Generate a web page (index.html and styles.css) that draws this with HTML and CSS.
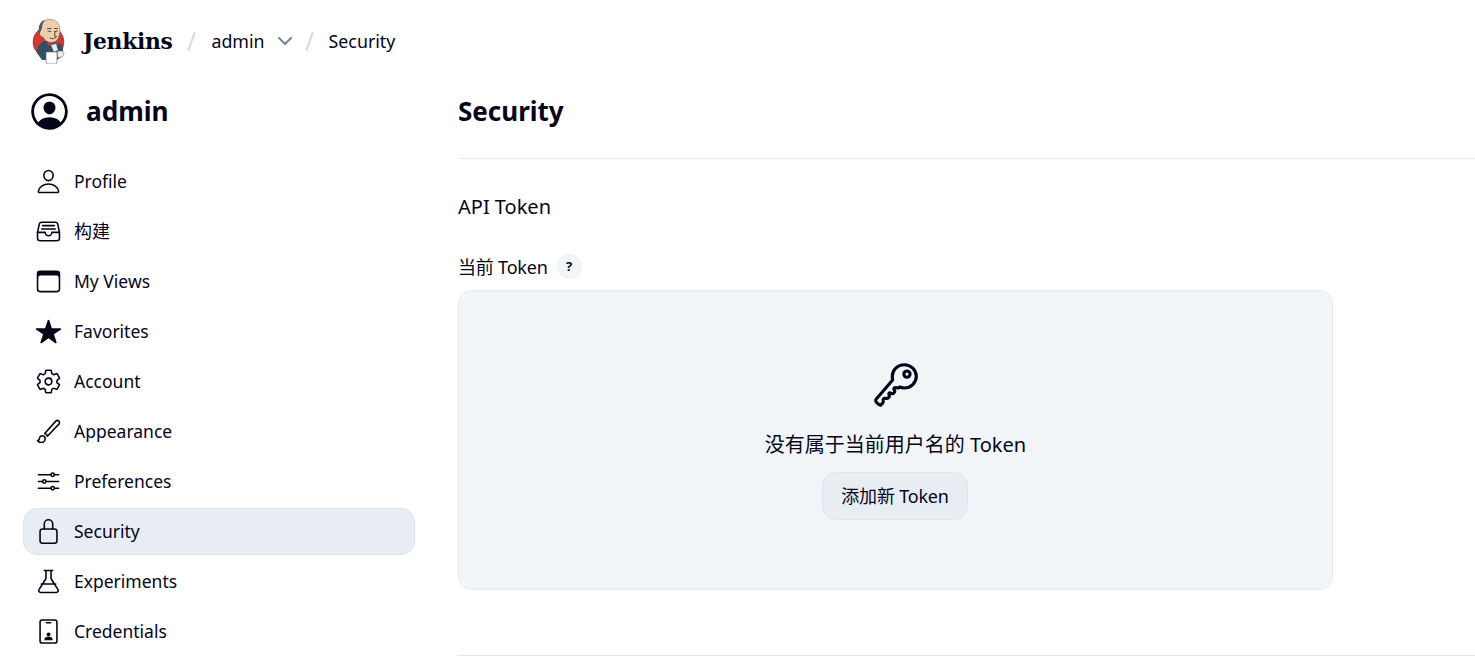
FILE: index.html
```html
<!DOCTYPE html>
<html lang="zh">
<head>
<meta charset="utf-8">
<title>Security - Jenkins</title>
<link rel="stylesheet" href="styles.css">
</head>
<body>
<header class="topbar">
  <svg class="logo" viewBox="0 0 36 46" width="36" height="46">
    <circle cx="18.500" cy="24" r="15.500" fill="#d33833" stroke="#3a3a3a" stroke-width=".5"/>
    <path d="M7 35c-.5-6 3-11 9-12l9 0c5 1 8 5 8 10l-2 6-4 3H12z" fill="#335061"/>
    <path d="M10 11C10 5 14 1.500 20 1.500c5.500 0 9.500 3.500 9.800 9.500.2 3-.3 6-1.300 8.500-1.300 3.300-4 5-7.500 5-3.500 0-6.500-2.500-8-5.500-1.500 0-3.500-1.500-3.500-4 0-2 .500-3 .500-3.500z" fill="#eccfae" stroke="#6b5b4e" stroke-width=".5"/>
    <path d="M9.500 16C7.500 10 9.500 3.500 15 1.800c-2.500 2.700-2.800 6.200-3.200 9.200-1 1-1.300 3-2.300 5z" fill="#4a5a68"/>
    <path d="M17.500 10.500l3.500 0M24.500 10.500l3 0M18 13l3 .5M24.500 13.500l3-.5M25 14l-.5 4 2 .5M20 20c2 1.300 4.500 .8 6-.8" stroke="#4a3b30" stroke-width=".9" fill="none" stroke-linecap="round"/>
    <path d="M17.500 23.500l5 2-5 2.500zM28 23.500l-5 2 5 2.500z" fill="#d33833"/>
    <path d="M21 27l5-1 2 6-4 2z" fill="#e6edf2"/>
    <path d="M16 34h11v10a2 2 0 0 1-2 2h-7a2 2 0 0 1-2-2z" fill="#fff" stroke="#5a6a78" stroke-width=".6"/>
    <path d="M27.500 33h4c2 0 3 2 2 4s-3 2.500-6 2.500z" fill="#eee" stroke="#5a6a78" stroke-width=".6"/>
  </svg>
  <span class="brand">Jenkins</span>
  <svg class="sep" viewBox="0 0 9 19" width="9" height="19"><path d="M1.500 18L7.500 1" fill="none" stroke="#cdd8e8" stroke-width="2" stroke-linecap="round"/></svg>
  <span class="crumb">admin</span>
  <svg class="chev" viewBox="0 0 14 8" width="14" height="8"><path d="M1 1l6 6 6-6" fill="none" stroke="#6d86a8" stroke-width="2" stroke-linecap="round" stroke-linejoin="round"/></svg>
  <svg class="sep" viewBox="0 0 9 19" width="9" height="19"><path d="M1.500 18L7.500 1" fill="none" stroke="#cdd8e8" stroke-width="2" stroke-linecap="round"/></svg>
  <span class="crumb">Security</span>
</header>
<div class="layout">
  <aside class="side">
    <div class="user">
      <svg class="avatar" viewBox="0 0 512 512" width="45" height="45"><path d="M258.900 48C141.920 46.420 46.420 141.920 48 258.900c1.560 112.190 92.910 203.540 205.100 205.100 116.998 1.600 212.480-93.900 210.880-210.880C462.440 140.910 371.090 49.560 258.900 48zm126.420 327.250a4 4 0 01-6.140-.32 124.270 124.270 0 00-32.350-29.590C321.370 329 289.110 320 256 320s-65.370 9-90.830 25.340a124.240 124.240 0 00-32.350 29.580 4 4 0 01-6.140.32A175.320 175.320 0 0180 259c-1.630-97.310 78.220-178.760 175.570-179S432 158.810 432 256a175.320 175.320 0 01-46.680 119.250z"/><path d="M256 144c-19.720 0-37.550 7.390-50.220 20.820s-19 32-17.570 51.930C191.110 256 221.520 288 256 288s64.830-32 67.790-71.240c1.480-19.740-4.800-38.140-17.680-51.840C293.390 151.440 275.590 144 256 144z"/></svg>
      <span class="user-name">admin</span>
    </div>
    <nav class="nav">
      <a class="item"><svg viewBox="0 0 512 512"><path d="M344 144c-3.920 52.870-44 96-88 96s-84.150-43.120-88-96c-4-55 35-96 88-96s92 42 88 96z"/><path d="M256 304c-87 0-175.300 48-191.640 138.600C62.390 453.520 68.570 464 80 464h352c11.440 0 17.620-10.480 15.650-21.400C431.300 352 343 304 256 304z"/></svg><span>Profile</span></a>
      <a class="item"><svg viewBox="0 0 512 512"><path d="M384 80H128c-26 0-43 14-48 40L48 272v112a48.140 48.140 0 0048 48h320a48.140 48.140 0 0048-48V272l-32-152c-5-27-23-40-48-40z"/><path d="M48 272h144M320 272h144M192 272a64 64 0 00128 0M144 144h224M128 208h256"/></svg><span class="cjk">构建</span></a>
      <a class="item"><svg viewBox="0 0 512 512"><rect x="48" y="64" width="416" height="384" rx="48"/><path class="fill" d="M397.820 64H114.180C77.690 64 48 94.150 48 131.200V176h16c0-16 16-32 32-32h320c16 0 32 16 32 32h16v-44.800C464 94.150 434.310 64 397.820 64z"/></svg><span>My Views</span></a>
      <a class="item"><svg viewBox="0 0 512 512"><path class="fill" d="M394 480a16 16 0 01-9.390-3L256 383.760 127.390 477a16 16 0 01-24.550-18.080L153 310.350 23 221.200a16 16 0 019-29.200h160.380l48.400-148.950a16 16 0 0130.440 0l48.400 149H480a16 16 0 019.050 29.200L359 310.350l50.130 148.530A16 16 0 01394 480z"/></svg><span>Favorites</span></a>
      <a class="item"><svg viewBox="0 0 512 512"><path d="M262.290 192.310a64 64 0 1057.400 57.400 64.130 64.130 0 00-57.400-57.400zM416.390 256a154.340 154.340 0 01-1.530 20.790l45.210 35.460a10.810 10.810 0 012.450 13.750l-42.770 74a10.810 10.810 0 01-13.140 4.590l-44.900-18.080a16.110 16.110 0 00-15.170 1.750A164.480 164.480 0 01325 400.800a15.940 15.940 0 00-8.820 12.140l-6.730 47.890a11.080 11.080 0 01-10.680 9.170h-85.540a11.110 11.110 0 01-10.690-8.870l-6.720-47.820a16.070 16.070 0 00-9-12.220 155.300 155.300 0 01-21.460-12.570 16 16 0 00-15.110-1.710l-44.890 18.070a10.810 10.810 0 01-13.140-4.580l-42.770-74a10.800 10.800 0 012.450-13.750l38.210-30a16.050 16.050 0 006-14.080c-.36-4.170-.58-8.330-.58-12.500s.21-8.270.58-12.350a16 16 0 00-6.070-13.940l-38.190-30A10.810 10.810 0 0149.480 186l42.770-74a10.810 10.810 0 0113.140-4.590l44.900 18.080a16.110 16.110 0 0015.170-1.750A164.480 164.480 0 01187 111.200a15.940 15.940 0 008.820-12.140l6.730-47.890A11.080 11.080 0 01213.230 42h85.540a11.110 11.110 0 0110.690 8.870l6.720 47.820a16.070 16.070 0 009 12.220 155.300 155.300 0 0121.460 12.570 16 16 0 0015.110 1.710l44.890-18.070a10.810 10.810 0 0113.140 4.580l42.770 74a10.800 10.800 0 01-2.450 13.750l-38.210 30a16.050 16.050 0 00-6.050 14.080c.33 4.140.55 8.300.55 12.470z"/></svg><span>Account</span></a>
      <a class="item"><svg viewBox="0 0 512 512"><path d="M452.370 59.630h0a40.490 40.490 0 00-57.260 0L184 294.740c23.080 4.700 46.120 27.260 49.950 49.950l218.420-227.800a40.410 40.410 0 000-57.260z"/><path d="M138 336c-29.880 0-54 24.500-54 54.860 0 23.950-20.880 36.570-36 39.560C64.560 452.630 92.650 464 120 464c39.770 0 72-32.590 72-72.750C192 361 167.880 336 138 336z"/></svg><span>Appearance</span></a>
      <a class="item"><svg viewBox="0 0 512 512"><path d="M368 128h80M64 128h240M368 384h80M64 384h240M208 256h240M64 256h80"/><circle cx="336" cy="128" r="32"/><circle cx="176" cy="256" r="32"/><circle cx="336" cy="384" r="32"/></svg><span>Preferences</span></a>
      <a class="item active"><svg viewBox="0 0 512 512"><path d="M336 208v-95a80 80 0 00-160 0v95"/><rect x="96" y="208" width="320" height="272" rx="48"/></svg><span>Security</span></a>
      <a class="item"><svg viewBox="0 0 512 512"><path d="M176 48h160M118 304h276M208 48v135.130a64.070 64.070 0 01-10.060 34.450L75.780 409.380C61.060 432.480 77.660 464 104.540 464h302.920c26.880 0 43.480-31.520 28.760-54.620L314.060 217.580A64.070 64.070 0 01304 183.130V48"/></svg><span>Experiments</span></a>
      <a class="item"><svg viewBox="0 0 512 512"><rect x="96" y="38" width="320" height="436" rx="40"/><path d="M216 90h80"/><circle class="fill" cx="256" cy="310" r="36"/><path class="fill" d="M176 420c0-50 40-68 80-68s80 18 80 68z"/></svg><span>Credentials</span></a>
    </nav>
  </aside>
  <main class="main">
    <h1 class="title">Security</h1>
    <section class="section">
      <h2 class="sub">API Token</h2>
      <div class="label"><span>当前 Token</span><span class="help">?</span></div>
      <div class="card">
        <svg class="key" viewBox="0 0 512 512" width="50" height="50"><path d="M218.100 167.170c0 13 0 25.600 4.100 37.400-43.100 50.600-156.900 184.300-167.500 194.500a20.170 20.170 0 00-6.700 15c0 8.500 5.200 16.700 9.600 21.300 6.600 6.900 34.800 33 40 28 15.400-15 18.500-19 24.800-25.200 9.500-9.300-1-28.300 2.300-36s6.800-9.200 12.500-10.400 15.800 2.900 23.700 3c8.300.1 12.800-3.400 19-9.200 5-4.600 8.600-8.900 8.700-15.600.2-9-12.800-20.900-3.100-30.400s23.700 6.200 34 5 22.800-15.500 24.100-21.600-11.700-21.800-9.700-30.700c.7-3 6.800-10 11.400-11s25 6.900 29.600 5.900c5.600-1.200 12.100-7.100 17.400-10.400 15.500 6.700 29.600 9.400 47.700 9.400 68.500 0 124-53.400 124-119.200S408.500 48 340 48s-121.900 53.370-121.900 119.170zM400 144a32 32 0 11-32-32 32 32 0 0132 32z"/></svg>
        <p class="empty">没有属于当前用户名的 Token</p>
        <button class="btn" type="button"><span class="btn-label">添加新 Token</span></button>
      </div>
    </section>
    <div class="rule"></div>
  </main>
</div>
</body>
</html>
```
FILE: styles.css
```css
html, body { margin: 0; height: 664px; overflow: hidden; background: #fff; }
body { font-family: "Noto Sans", "Noto Sans CJK SC", sans-serif; color: #05051a; font-size: 18px; }
.topbar { display: flex; align-items: center; height: 82px; padding-left: 30px; box-sizing: border-box; }
.brand { font-family: "DejaVu Serif", serif; font-weight: 700; font-size: 21.800px; margin-left: 17px; margin-right: 15px; letter-spacing: -0.300px; }
.sep { flex: none; }
.sep + .crumb { margin-left: 15px; }
.crumb { font-size: 17.800px; }
.chev { margin-left: 13px; margin-right: 13px; flex: none; }
.layout { display: grid; grid-template-columns: 415px 1fr; column-gap: 43px; }
.side { padding-left: 23px; }
.user { display: flex; align-items: center; gap: 14px; height: 58px; padding-left: 4px; }
.avatar { fill: #05051a; flex: none; }
.user-name { font-size: 26.200px; font-weight: 700; }
.nav { display: flex; flex-direction: column; margin-top: 18px; font-size: 17.500px; }
.item { display: flex; align-items: center; gap: 12px; height: 47px; margin-bottom: 3px; padding-left: 11px; box-sizing: border-box; border: 1px solid transparent; border-radius: 14px; }
.item span { padding-bottom: 2px; }
.item .cjk { font-size: 18px; padding-bottom: 4px; }
.item svg { width: 27px; height: 27px; flex: none; fill: none; stroke: #05051a; stroke-width: 30; stroke-linecap: round; stroke-linejoin: round; }
.item svg .fill { fill: #05051a; stroke: none; }
.active { background: #e8ecf3; border-color: #dfe4ec; }
.main { min-width: 0; }
.title { margin: 0; font-size: 26px; font-weight: 700; height: 76px; line-height: 58px; border-bottom: 1px solid #e9e9f5; }
.section { padding-top: 32px; }
.sub { margin: 0; font-size: 20px; font-weight: 400; line-height: 32px; }
.label { display: flex; align-items: center; gap: 9px; margin-top: 28px; height: 30px; font-size: 18px; letter-spacing: -0.200px; }
.help { width: 25px; height: 25px; border-radius: 50%; background: #f1f4f8; border: 1px solid #edf0f5; box-sizing: border-box; display: flex; align-items: center; justify-content: center; font-size: 13px; font-weight: 700; }
.card { width: 875px; height: 300px; margin-top: 9px; box-sizing: border-box; background: #f2f5f8; border: 1px solid #e8ecf2; border-radius: 14px; display: flex; flex-direction: column; align-items: center; padding-top: 69px; }
.key { fill: none; stroke: #05051a; stroke-width: 32; stroke-linejoin: round; flex: none; }
.empty { margin: 20px 0 0; font-size: 20px; line-height: 30px; }
.btn { margin-top: 12px; margin-right: 1px; width: 146px; height: 48px; border: 1px solid #e0e5ed; border-radius: 14px; background: #e8ecf3; font: inherit; letter-spacing: -0.200px; color: inherit; padding: 0 0 2px; }
.rule { margin-top: 65px; border-top: 1px solid #e4e6ee; }
```
